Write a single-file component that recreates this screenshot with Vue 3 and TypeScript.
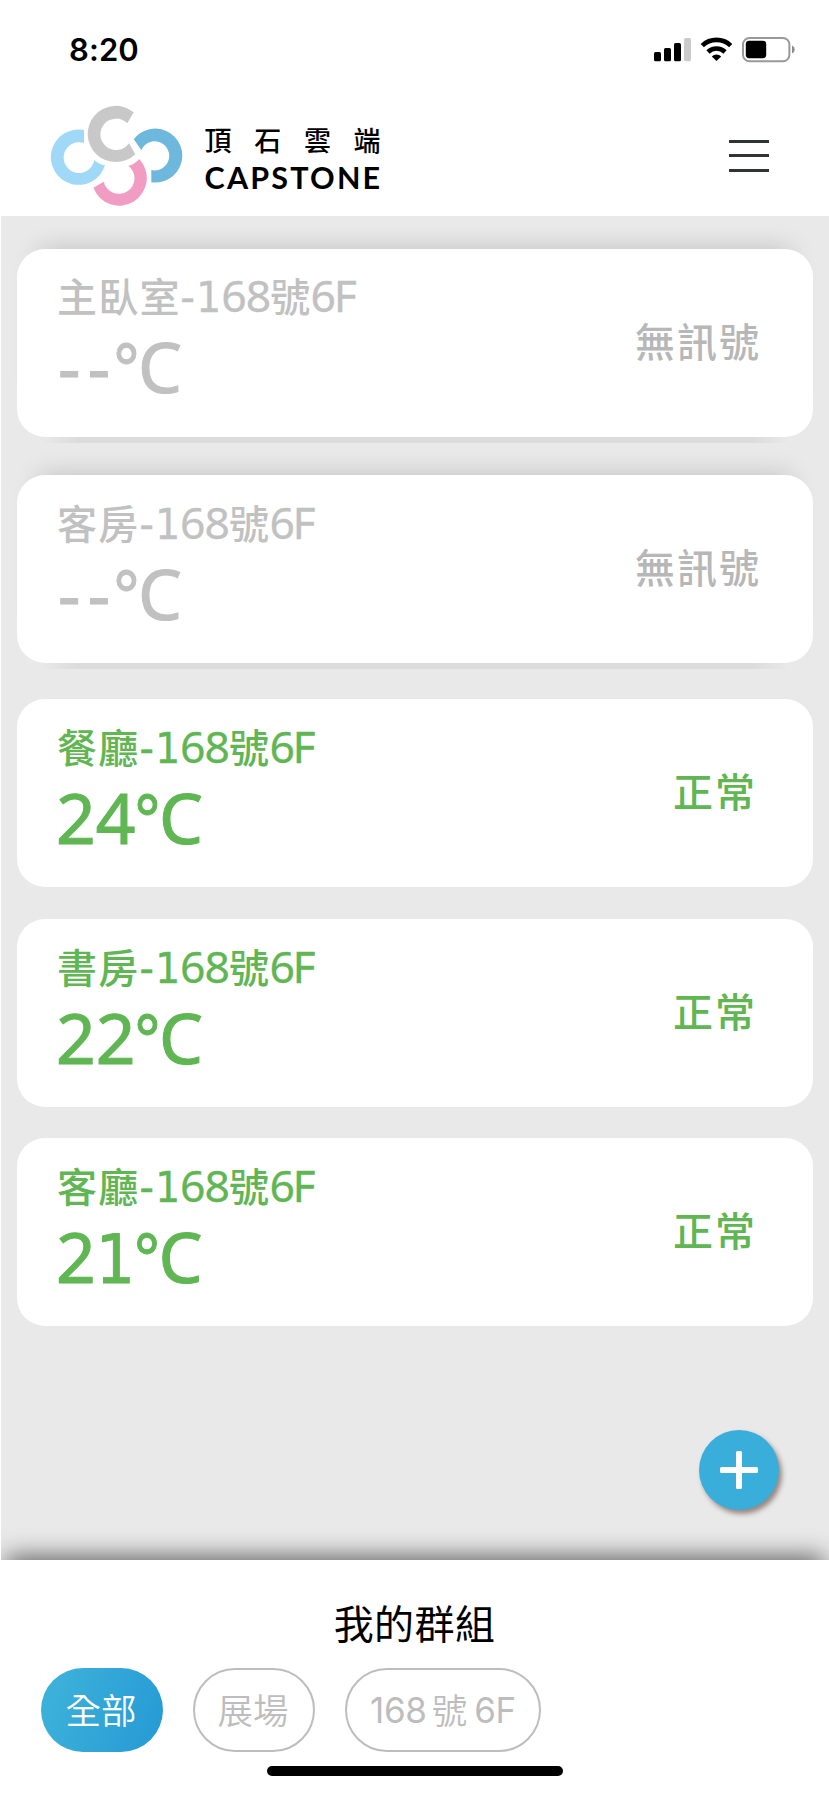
<script setup lang="ts">
interface Room {
  id: number
  area: string
  temp: string
  online: boolean
}

interface Part {
  text: string
  kind: 'han' | 'one' | 'dash' | 'latin'
}

const rooms: Room[] = [
  { id: 1, area: '主臥室-168號6F', temp: '--', online: false },
  { id: 2, area: '客房-168號6F', temp: '--', online: false },
  { id: 3, area: '餐廳-168號6F', temp: '24', online: true },
  { id: 4, area: '書房-168號6F', temp: '22', online: true },
  { id: 5, area: '客廳-168號6F', temp: '21', online: true },
]

const groups = ['全部', '展場', '168號6F']
const activeGroup = '全部'

function kindOf(text: string): Part['kind'] {
  if (/[\u4e00-\u9fff]/.test(text)) return 'han'
  if (text === '1') return 'one'
  return text === '-' ? 'dash' : 'latin'
}

// Splits mixed text so that Han and Latin runs can be set separately.
function split(text: string): Part[] {
  return (text.match(/[\u4e00-\u9fff]+|[^\u4e00-\u9fff]+/g) ?? []).map((t) => ({ text: t, kind: kindOf(t) }))
}

// Also isolates the figure 1, which is set with a foot serif, and the hyphen.
function splitFigures(text: string): Part[] {
  return (text.match(/[\u4e00-\u9fff]+|1|-|[^\u4e00-\u9fff1-]+/g) ?? []).map((t) => ({ text: t, kind: kindOf(t) }))
}

function figures(temp: string): Part[] {
  return [...temp].map((t) => ({ text: t, kind: kindOf(t) }))
}
</script>

<template>
  <div class="phone">
    <header class="top">
      <div class="status-bar">
        <span class="clock">8:20</span>
        <svg class="indicators" width="144" height="28" viewBox="652 36 144 28">
          <rect x="654" y="52" width="7" height="9.3" rx="1.6" />
          <rect x="664" y="48" width="7" height="13.3" rx="1.6" />
          <rect x="674" y="43" width="7" height="18.3" rx="1.6" />
          <rect x="684" y="38" width="7" height="23.3" rx="1.6" fill="#cbcbcb" />
          <g fill="none" stroke="#000" stroke-width="4.6">
            <path d="M702.3 45.6 A20.5 20.5 0 0 1 730.7 45.6" />
            <path d="M708 52 A12.2 12.2 0 0 1 725 52" />
          </g>
          <path d="M716.5 61 L711.8 56.4 A6.8 6.8 0 0 1 721.2 56.4 Z" />
          <rect x="743" y="38" width="46.4" height="23.3" rx="6.5" fill="#fff" stroke="#999" stroke-width="2" />
          <rect x="745.8" y="40.8" width="20.4" height="17.4" rx="3.4" />
          <path d="M792 45.4 A4.3 4.3 0 0 1 792 53.4 Z" fill="#8c8c8c" />
        </svg>
      </div>
      <div class="brand-bar">
        <svg class="logo" width="134" height="104" viewBox="50 104 134 104">
          <path fill="#c8c8c8" d="M133.7 112.3 A28.1 28.1 0 1 0 135.3 154.2 L129 143.3 A15.7 15.7 0 1 1 127.3 123.3 Z" />
          <path fill="#a0d9f7" d="M84 130 A27.7 27.7 0 1 0 105 165.3 Q99 164.5 94.3 160 A15.4 15.4 0 1 1 84 143 Z" />
          <path fill="#f19dc3" d="M139.2 159 A27.6 27.6 0 1 1 93.4 187.8 L103.7 181.7 A15.6 15.6 0 1 0 128.3 165.8 Q134.5 164.5 139.2 159 Z" />
          <path fill="#6db8dc" d="M133.8 139.2 A27 27 0 1 1 151.3 182.3 L151.3 170 A14.5 14.5 0 1 0 141.4 150.2 Z" />
        </svg>
        <div class="brand">
          <span class="brand-zh">頂石雲端</span>
          <span class="brand-en">CAPSTONE</span>
        </div>
        <button class="menu" type="button" aria-label="選單"><i></i><i></i><i></i></button>
      </div>
    </header>

    <main class="rooms">
      <article v-for="r in rooms" :key="r.id" class="card" :class="r.online ? 'on' : 'off'">
        <div class="info">
          <div class="area"><span v-for="(p, i) in splitFigures(r.area)" :key="i" :class="p.kind">{{ p.text }}</span></div>
          <div class="temp"><span v-for="(p, i) in figures(r.temp)" :key="i" class="figure" :class="p.kind">{{ p.text }}</span><span class="deg">°</span><span class="unit">C</span></div>
        </div>
        <div class="state">{{ r.online ? '正常' : '無訊號' }}</div>
      </article>
      <button class="add" type="button" aria-label="新增">
        <svg width="38" height="38" viewBox="0 0 38 38">
          <rect x="0" y="16" width="38" height="6" rx="1.5" fill="#fff" />
          <rect x="16" y="0" width="6" height="38" rx="1.5" fill="#fff" />
        </svg>
      </button>
      <div class="sheet-shade"></div>
    </main>

    <footer class="sheet">
      <h2>我的群組</h2>
      <div class="chips">
        <button v-for="g in groups" :key="g" type="button" class="chip" :class="{ active: g === activeGroup }">
          <span v-for="(p, i) in split(g)" :key="i" :class="p.kind">{{ p.text }}</span>
        </button>
      </div>
      <div class="home"></div>
    </footer>
  </div>
</template>

<style>
body {
  background: #fff;
}
</style>

<style scoped>
.phone {
  width: 829px;
  height: 1793px;
  overflow: hidden;
  display: flex;
  flex-direction: column;
  background: #fff;
  font-family: 'Noto Sans CJK TC', sans-serif;
}
button {
  border: 0;
  padding: 0;
  background: none;
  font: inherit;
}
.top {
  height: 216px;
  flex: none;
}
.status-bar {
  height: 100px;
  padding: 0 33px 0 69px;
  display: flex;
  align-items: center;
  justify-content: space-between;
}
.clock {
  font: 600 31px/40px Inter, sans-serif;
  letter-spacing: 0.1px;
}
.brand-bar {
  height: 116px;
  display: flex;
  align-items: flex-start;
  padding: 4px 60px 0 50px;
}
.logo {
  flex: none;
}
.brand {
  margin: 16px 0 0 20.5px;
  display: flex;
  flex-direction: column;
}
.brand-zh {
  font-size: 27px;
  line-height: 40px;
  height: 40px;
  font-weight: 500;
  letter-spacing: 22.7px;
}
.brand-en {
  font: 700 30.5px/34px Lato, sans-serif;
  letter-spacing: 2.2px;
}
.menu {
  margin: 36px 0 0 auto;
  width: 40px;
  display: flex;
  flex-direction: column;
  gap: 11.4px;
}
.menu i {
  height: 3px;
  background: #303333;
}
.rooms {
  height: 1344px;
  flex: none;
  box-sizing: border-box;
  margin-left: 1px;
  padding: 33px 16px 0;
  background: #e9e9e9;
  position: relative;
  overflow: hidden;
}
.card {
  position: relative;
  height: 188px;
  box-sizing: border-box;
  border-radius: 28px;
  background: #fff;
  display: flex;
  align-items: center;
  justify-content: space-between;
  padding: 0 56px 0 40px;
}
.card + .card {
  margin-top: 32px;
}
.card.off + .card {
  margin-top: 38px;
}
.card.off + .card.on {
  margin-top: 36px;
}
.card:nth-child(5) {
  margin-top: 31px;
}
.card.on {
  color: #5fb653;
}
.card.off {
  color: #c1c1c1;
  padding-right: 52px;
  box-shadow: 0 -22px 26px -22px rgba(0, 0, 0, 0.18);
}
.card.off::after {
  content: '';
  position: absolute;
  left: 24px;
  right: 24px;
  bottom: -5.5px;
  height: 5.5px;
  background: linear-gradient(90deg, transparent, rgba(0, 0, 0, 0.06) 5%, rgba(0, 0, 0, 0.06) 95%, transparent);
}
.info {
  align-self: flex-start;
}
.area {
  height: 60px;
  margin-top: 17px;
  font-size: 40px;
  line-height: 60px;
  white-space: nowrap;
}
.card:first-child .area {
  margin: 16px 0 1px;
}
.area span {
  line-height: 0;
}
.area .han {
  font-weight: 500;
  letter-spacing: 1.2px;
}
.area .latin,
.area .dash {
  font-family: 'Noto Sans', sans-serif;
  font-size: 44.5px;
  letter-spacing: -1px;
  -webkit-text-stroke: 0.3px currentColor;
}
.area .dash {
  letter-spacing: 1.4px;
}
.area .latin:last-child {
  margin-left: -0.8px;
  letter-spacing: -2.4px;
}
.area .one {
  font-family: 'DejaVu Sans Condensed', 'DejaVu Sans', sans-serif;
  font-stretch: condensed;
  font-size: 43.5px;
  -webkit-text-stroke: 0.4px currentColor;
}
.temp {
  height: 80px;
  margin: 1px 0 0 -1px;
  font: 69.5px/80px 'Noto Sans', sans-serif;
  white-space: nowrap;
  -webkit-text-stroke: 1.1px currentColor;
}
.temp span {
  line-height: 0;
}
.temp .one,
.deg {
  font-family: 'DejaVu Sans Condensed', 'DejaVu Sans', sans-serif;
  font-stretch: condensed;
  font-size: 68.5px;
  -webkit-text-stroke: 0.9px currentColor;
}
.figure:nth-child(2) {
  letter-spacing: -3.6px;
}
.deg {
  letter-spacing: -3.8px;
}
.figure.dash {
  letter-spacing: 7.4px;
}
.figure.dash:first-child {
  padding-left: 2px;
}
.figure.dash:nth-child(2) {
  letter-spacing: 0.8px;
}
.state {
  margin-top: -6px;
  font-size: 40px;
  line-height: 56px;
  font-weight: 500;
  letter-spacing: 2px;
}
.off .state {
  color: #b7b7b7;
}
.add {
  position: absolute;
  right: 50px;
  bottom: 50px;
  width: 80px;
  height: 80px;
  border-radius: 50%;
  background: #39aedb;
  box-shadow: 3px 4px 5px rgba(70, 40, 30, 0.5);
  display: flex;
  align-items: center;
  justify-content: center;
}
.sheet-shade {
  position: absolute;
  left: 8px;
  right: 8px;
  bottom: -20px;
  height: 20px;
  box-shadow: 0 0 24px 3px rgba(0, 0, 0, 0.62);
}
.sheet {
  flex: 1;
  display: flex;
  flex-direction: column;
  background: #fff;
}
h2 {
  margin: 32px 0 0;
  text-align: center;
  font-size: 40px;
  line-height: 60px;
  height: 60px;
  font-weight: 400;
  letter-spacing: 0.4px;
  color: #000;
}
.chips {
  margin-top: 16px;
  padding-left: 41px;
  display: flex;
  gap: 30px;
}
.chip {
  width: 122px;
  height: 84px;
  box-sizing: border-box;
  border: 2px solid #bdbdbd;
  border-radius: 42px;
  display: flex;
  align-items: center;
  justify-content: center;
  gap: 6px;
  color: #bdbdbd;
  font-size: 35.5px;
  font-weight: 350;
  line-height: 50px;
}
.chip .han {
  margin: -2px 1px 0 -1px;
}
.chip .latin {
  font: 400 35px/50px Inter, sans-serif;
  letter-spacing: -0.3px;
}
.chip:last-child {
  width: 196px;
}
.chip.active {
  border: 0;
  color: #fff;
  background: linear-gradient(110deg, #3bb0d9 15%, #2599d5);
}
.home {
  width: 296px;
  height: 10px;
  border-radius: 5px;
  background: #000;
  margin: 14px 0 0 267px;
}
</style>
